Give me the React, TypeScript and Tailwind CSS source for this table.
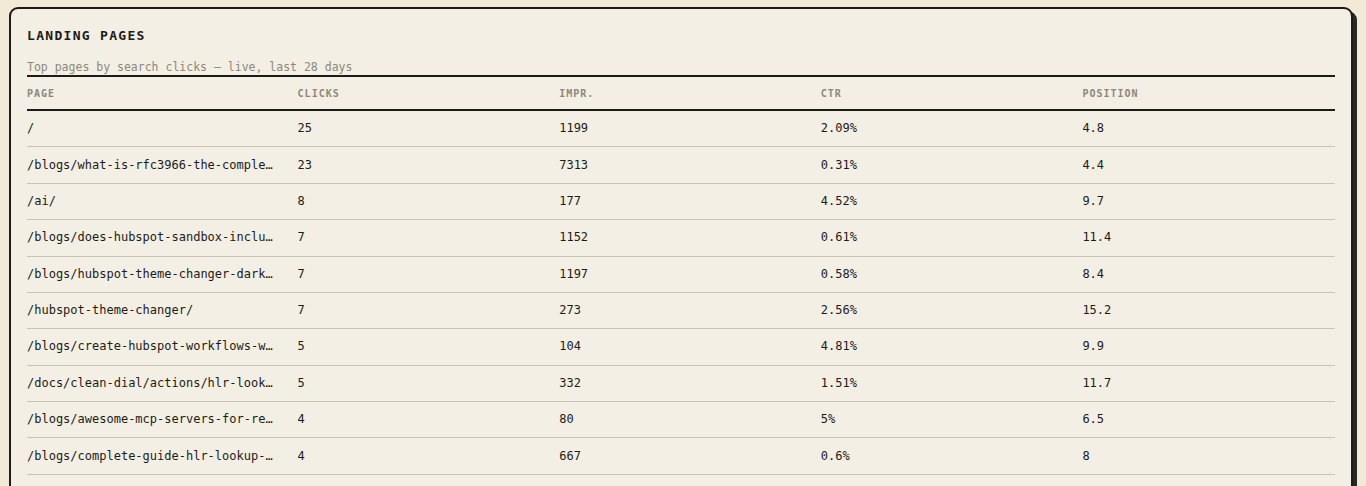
import React from "react";

export default function App() {
  const pages = [
    { page: "/", clicks: 25, impr: 1199, ctr: "2.09%", pos: "4.8" },
    { page: "/blogs/what-is-rfc3966-the-complete-guide/", clicks: 23, impr: 7313, ctr: "0.31%", pos: "4.4" },
    { page: "/ai/", clicks: 8, impr: 177, ctr: "4.52%", pos: "9.7" },
    { page: "/blogs/does-hubspot-sandbox-include-workflows/", clicks: 7, impr: 1152, ctr: "0.61%", pos: "11.4" },
    { page: "/blogs/hubspot-theme-changer-dark-mode/", clicks: 7, impr: 1197, ctr: "0.58%", pos: "8.4" },
    { page: "/hubspot-theme-changer/", clicks: 7, impr: 273, ctr: "2.56%", pos: "15.2" },
    { page: "/blogs/create-hubspot-workflows-with-ai/", clicks: 5, impr: 104, ctr: "4.81%", pos: "9.9" },
    { page: "/docs/clean-dial/actions/hlr-lookup/", clicks: 5, impr: 332, ctr: "1.51%", pos: "11.7" },
    { page: "/blogs/awesome-mcp-servers-for-revops/", clicks: 4, impr: 80, ctr: "5%", pos: "6.5" },
    { page: "/blogs/complete-guide-hlr-lookup-api/", clicks: 4, impr: 667, ctr: "0.6%", pos: "8" },
  ];

  const mono = { fontFamily: '"DejaVu Sans Mono", "Liberation Mono", monospace' };

  return (
    <div className="min-h-[486px] bg-[#f2e9d6] pl-[9px] pt-[7px]" style={mono}>
      <section className="w-[1344px] rounded-[9px] border-2 border-[#1d1b18] bg-[#f3efe4] px-4 pb-6 pt-[17px] shadow-[4px_4px_0_#2a2825]">
        {/* Heading */}
        <h2 className="text-[13px] font-bold leading-5 tracking-[0.1em] text-[#1d1b18]">
          LANDING PAGES
        </h2>
        <p className="mt-[13px] text-[11.5px] leading-4 text-[#8e877a]">
          Top pages by search clicks — live, last 28 days
        </p>

        {/* Table */}
        <table className="w-full table-fixed border-collapse border-t-2 border-[#1d1b18]">
          <thead>
            <tr className="border-b-2 border-[#1d1b18]">
              {["PAGE", "CLICKS", "IMPR.", "CTR", "POSITION"].map((h, i) => (
                <th
                  key={h}
                  className={`${i === 0 ? "pl-0" : "pl-[9px]"} pb-2 pt-[10px] text-left text-[10px] font-bold leading-[14px] tracking-[0.1em] text-[#8e877a]`}
                >
                  {h}
                </th>
              ))}
            </tr>
          </thead>
          <tbody>
            {pages.map((r) => (
              <tr key={r.page} className="border-b border-[#c9c3b4] text-[12px] leading-[17px] text-[#1d1b18]">
                <td className="truncate py-[9.2px] pr-[13px]">{r.page}</td>
                <td className="py-[9.2px] pl-[9px]">{r.clicks}</td>
                <td className="py-[9.2px] pl-[9px]">{r.impr}</td>
                <td className="py-[9.2px] pl-[9px]">{r.ctr}</td>
                <td className="py-[9.2px] pl-[9px]">{r.pos}</td>
              </tr>
            ))}
          </tbody>
        </table>
      </section>
    </div>
  );
}
